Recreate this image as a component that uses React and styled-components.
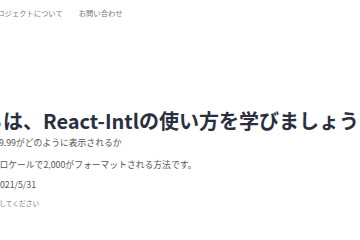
import React from "react";
import styled, { createGlobalStyle } from "styled-components";

const Global = createGlobalStyle`
  html, body {
    margin: 0;
    padding: 0;
    background: #fff;
    overflow: hidden;
  }
  body {
    width: 360px;
    height: 240px;
    font-family: "Noto Sans CJK JP", "Noto Sans", sans-serif;
  }
`;

const Page = styled.div`
  width: 360px;
  height: 240px;
  overflow: hidden;
  display: flex;
  flex-direction: column;
`;

const Nav = styled.nav`
  display: flex;
  gap: 16px;
  padding-top: 6px;
  margin-left: ${(p) => p.$shift}px;
  white-space: nowrap;
`;

const NavLink = styled.a`
  font-size: 7.3px;
  line-height: 14px;
  color: #777;
  text-decoration: none;
`;

const Article = styled.main`
  display: flex;
  flex-direction: column;
  padding-top: 86px;
  white-space: nowrap;
`;

const Title = styled.h1`
  margin: 0 0 0 ${(p) => p.$shift}px;
  font-size: 20px;
  line-height: 30px;
  font-weight: 700;
  color: #2b3040;
`;

const Line = styled.p`
  margin: ${(p) => p.$top}px 0 0 ${(p) => p.$shift}px;
  font-size: ${(p) => p.$size}px;
  line-height: 16px;
  color: ${(p) => p.$color};
`;

export default function App() {
  return (
    <>
      <Global />
      <Page>
        <Nav $shift={-10}>
          <NavLink href="#">プロジェクトについて</NavLink>
          <NavLink href="#">お問い合わせ</NavLink>
        </Nav>
        <Article>
          <Title $shift={-77}>こんにちは、React-Intlの使い方を学びましょう</Title>
          <Line $top={-1} $shift={-6} $size={8.8} $color="#555">
            $9.99がどのように表示されるか
          </Line>
          <Line $top={6} $shift={-27} $size={8.8} $color="#555">
            異なるロケールで2,000がフォーマットされる方法です。
          </Line>
          <Line $top={4} $shift={-27} $size={8.8} $color="#555">
            日付: 2021/5/31
          </Line>
          <Line $top={2} $shift={-14} $size={6.7} $color="#777">
            確認してください
          </Line>
        </Article>
      </Page>
    </>
  );
}
